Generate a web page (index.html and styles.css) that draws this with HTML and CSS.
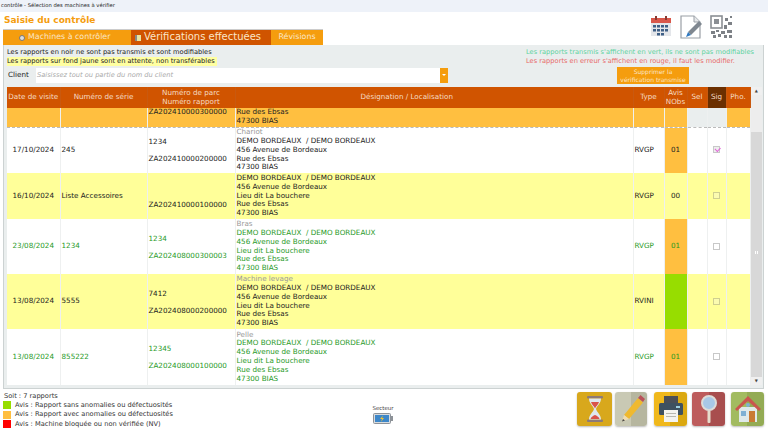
FILE: index.html
```html
<!DOCTYPE html>
<html lang="fr">
<head>
  <meta charset="UTF-8" />
  <title>contrôle - Sélection des machines à vérifier</title>
  <link rel="stylesheet" href="styles.css">
</head>
<body>
  <div class="titlebar">contrôle - Sélection des machines à vérifier</div>

  <div class="head">
    <h1>Saisie du contrôle</h1>
    <div class="head-icons">
      <svg width="22" height="22" viewBox="0 0 22 22">
        <rect x="1" y="3" width="20" height="18" fill="#e4e6ea"/>
        <rect x="1" y="3" width="20" height="5" fill="#d9574a"/>
        <rect x="5" y="1" width="2" height="4" fill="#8a3a32"/>
        <rect x="15" y="1" width="2" height="4" fill="#8a3a32"/>
        <g fill="#3f5f86">
          <rect x="3" y="10" width="3" height="2.5"/><rect x="7" y="10" width="3" height="2.5"/><rect x="11" y="10" width="3" height="2.5"/><rect x="15" y="10" width="3" height="2.5"/>
          <rect x="3" y="14" width="3" height="2.5"/><rect x="7" y="14" width="3" height="2.5"/><rect x="11" y="14" width="3" height="2.5"/><rect x="15" y="14" width="3" height="2.5"/>
          <rect x="7" y="18" width="3" height="2.5"/><rect x="11" y="18" width="3" height="2.5"/>
        </g>
      </svg>
      <svg width="22" height="24" viewBox="0 0 22 24">
        <path d="M1 1h13l6 6v16H1z" fill="#fff" stroke="#9a9fa6" stroke-width="1.2"/>
        <path d="M14 1v6h6" fill="#e6e8ea" stroke="#9a9fa6"/>
        <path d="M19 6l3 3-11 11-3-3z" fill="#7f8790"/>
        <path d="M8 17l3 3-5 2z" fill="#2f78c0"/>
      </svg>
      <svg width="24" height="24" viewBox="0 0 24 24">
        <rect x="1" y="1" width="11" height="12" fill="none" stroke="#8b8f94" stroke-width="1.6"/>
        <rect x="4" y="4" width="5" height="5" fill="#8b8f94"/>
        <g fill="#7d8186">
          <rect x="15" y="3" width="3" height="3"/><rect x="20" y="1" width="2" height="2"/><rect x="18" y="7" width="4" height="3"/><rect x="14" y="10" width="3" height="4"/>
          <rect x="1" y="16" width="4" height="3"/><rect x="6" y="15" width="3" height="2"/><rect x="11" y="16" width="4" height="3"/><rect x="17" y="15" width="5" height="3"/>
          <rect x="3" y="20" width="3" height="3"/><rect x="8" y="19" width="3" height="3"/><rect x="14" y="20" width="3" height="3"/><rect x="19" y="20" width="3" height="3"/>
        </g>
      </svg>
    </div>
  </div>

  <div class="tabs">
    <div class="tab tab-machines"><span class="tab-ico clock"></span>Machines à contrôler</div>
    <div class="tab tab-active"><span class="tab-ico note"></span>Vérifications effectuées</div>
    <div class="tab tab-revisions">Révisions</div>
  </div>

  <div class="panel">
    <div class="notes">
      <div>
        <div>Les rapports en noir ne sont pas transmis et sont modifiables</div>
        <div class="note-yellow">Les rapports sur fond jaune sont en attente, non transférables</div>
      </div>
      <div class="notes-right">
        <div class="note-green">Les rapports transmis s'affichent en vert, ils ne sont pas modifiables</div>
        <div class="note-red">Les rapports en erreur s'affichent en rouge, il faut les modifier.</div>
      </div>
    </div>

    <div class="client-row">
      <label>Client</label>
      <div class="client-input">Saisissez tout ou partie du nom du client</div>
      <div class="client-drop"></div>
      <button class="btn-delete">Supprimer la<br>vérification transmise</button>
    </div>

    <div class="grid-wrap">
      <table class="grid">
        <colgroup>
          <col class="c-date"><col class="c-serie"><col class="c-parc"><col class="c-desig"><col class="c-type"><col class="c-avis"><col class="c-sel"><col class="c-sig"><col class="c-pho">
        </colgroup>
        <thead>
          <tr>
            <th>Date de visite</th>
            <th>Numéro de série</th>
            <th>Numéro de parc<br>Numéro rapport</th>
            <th class="th-desig">Désignation / Localisation</th>
            <th>Type</th>
            <th>Avis<br>NObs</th>
            <th>Sel</th>
            <th class="th-sig">Sig</th>
            <th>Pho.</th>
          </tr>
        </thead>
        <tbody>
          <tr class="row-current">
            <td></td>
            <td></td>
            <td class="top">ZA202410000300000</td>
            <td class="left top">Rue des Ebsas<br>47300 BIAS</td>
            <td></td>
            <td></td>
            <td class="blank"></td>
            <td class="blank"></td>
            <td></td>
          </tr>
          <tr class="h5">
            <td class="date">17/10/2024</td>
            <td>245</td>
            <td><div class="parc">1234</div><div class="parc">ZA202410000200000</div></td>
            <td class="left"><span class="machine">Chariot</span><br>DEMO BORDEAUX &nbsp;/ DEMO BORDEAUX<br>456 Avenue de Bordeaux<br>Rue des Ebsas<br>47300 BIAS</td>
            <td>RVGP</td>
            <td class="avis-orange center">01</td>
            <td></td>
            <td class="center"><span class="check checked"></span></td>
            <td></td>
          </tr>
          <tr class="h5 row-yellow">
            <td class="date">16/10/2024</td>
            <td>Liste Accessoires</td>
            <td><div class="parc">&nbsp;</div><div class="parc">ZA202410000100000</div></td>
            <td class="left">DEMO BORDEAUX &nbsp;/ DEMO BORDEAUX<br>456 Avenue de Bordeaux<br>Lieu dit La bouchere<br>Rue des Ebsas<br>47300 BIAS</td>
            <td>RVGP</td>
            <td class="center">00</td>
            <td></td>
            <td class="center"><span class="check dim"></span></td>
            <td></td>
          </tr>
          <tr class="h6 row-green">
            <td class="date">23/08/2024</td>
            <td>1234</td>
            <td><div class="parc">1234</div><div class="parc">ZA202408000300003</div></td>
            <td class="left"><span class="machine">Bras</span><br>DEMO BORDEAUX &nbsp;/ DEMO BORDEAUX<br>456 Avenue de Bordeaux<br>Lieu dit La bouchere<br>Rue des Ebsas<br>47300 BIAS</td>
            <td>RVGP</td>
            <td class="avis-orange center">01</td>
            <td></td>
            <td class="center"><span class="check"></span></td>
            <td></td>
          </tr>
          <tr class="h6 row-yellow">
            <td class="date">13/08/2024</td>
            <td>5555</td>
            <td><div class="parc">7412</div><div class="parc">ZA202408000200000</div></td>
            <td class="left"><span class="machine">Machine levage</span><br>DEMO BORDEAUX &nbsp;/ DEMO BORDEAUX<br>456 Avenue de Bordeaux<br>Lieu dit La bouchere<br>Rue des Ebsas<br>47300 BIAS</td>
            <td>RVINI</td>
            <td class="avis-green"></td>
            <td></td>
            <td class="center"><span class="check dim"></span></td>
            <td></td>
          </tr>
          <tr class="h7 row-green">
            <td class="date">13/08/2024</td>
            <td>855222</td>
            <td><div class="parc">12345</div><div class="parc">ZA202408000100000</div></td>
            <td class="left"><span class="machine">Pelle</span><br>DEMO BORDEAUX &nbsp;/ DEMO BORDEAUX<br>456 Avenue de Bordeaux<br>Lieu dit La bouchere<br>Rue des Ebsas<br>47300 BIAS</td>
            <td>RVGP</td>
            <td class="avis-orange center">01</td>
            <td></td>
            <td class="center"><span class="check"></span></td>
            <td></td>
          </tr>
        </tbody>
      </table>
      <div class="scrollbar">
        <div class="sb-btn">&#9650;</div>
        <div class="sb-thumb"></div>
        <div class="sb-track"><span class="sb-grip"></span></div>
        <div class="sb-btn">&#9660;</div>
      </div>
    </div>
  </div>

  <div class="footer">
    <div class="legend">
      <div class="legend-count">Soit : 7 rapports</div>
      <div class="legend-row"><span class="swatch sw-green"></span>Avis : Rapport sans anomalies ou défectuosités</div>
      <div class="legend-row"><span class="swatch sw-orange"></span>Avis : Rapport avec anomalies ou défectuosités</div>
      <div class="legend-row"><span class="swatch sw-red"></span>Avis : Machine bloquée ou non vérifiée (NV)</div>
    </div>
    <div class="sector">
      <div>Secteur</div>
      <svg width="20" height="11" viewBox="0 0 20 11">
        <rect x="0.5" y="0.5" width="17" height="10" rx="1" fill="#d8dbde" stroke="#8d9298"/>
        <rect x="18" y="3" width="2" height="5" fill="#8d9298"/>
        <rect x="2" y="2" width="14" height="7" fill="#3d87c9"/>
        <path d="M10 2.500L7 6h2l-1 3 3-4H9z" fill="#f2c230"/>
      </svg>
    </div>
    <div class="actions">
      <div class="action act-hourglass">
        <svg width="26" height="30" viewBox="0 0 26 30">
          <rect x="5" y="2" width="16" height="2.500" rx="1" fill="#8d7a78"/>
          <rect x="5" y="25.500" width="16" height="2.500" rx="1" fill="#8d7a78"/>
          <path d="M7 4.500h12c0 5-4 7-5 10.500 1 3.500 5 5.500 5 10.500H7c0-5 4-7 5-10.500C11 11.500 7 9.500 7 4.500z" fill="#dfe8ee"/>
          <path d="M9 8h8c-1 3-3 4-4 6.500C12 12 10 11 9 8z" fill="#d9534a"/>
          <path d="M8.500 25c.5-2 3-3.500 4.500-4 1.500.5 4 2 4.500 4z" fill="#d9534a"/>
        </svg>
      </div>
      <div class="action act-pencil">
        <svg width="28" height="30" viewBox="0 0 28 30">
          <path d="M7 21L21 4l5 4.500L12 25z" fill="#efb92f"/>
          <path d="M21 4l2.500-3 4.500 4-2 3z" fill="#b9525a"/>
          <path d="M7 21l5 4-7 2.500z" fill="#f0dcb0"/>
          <path d="M5 27.500l1-2.500 2 1.500z" fill="#444"/>
        </svg>
      </div>
      <div class="action act-print">
        <svg width="26" height="28" viewBox="0 0 26 28">
          <rect x="6" y="1" width="14" height="8" fill="#4a4f57"/>
          <rect x="1" y="8" width="24" height="12" rx="1.500" fill="#3e5160"/>
          <rect x="18" y="11" width="4" height="2" fill="#9fd0e0"/>
          <rect x="6" y="15" width="14" height="12" fill="#f4f4f0"/>
          <rect x="8" y="18" width="10" height="1" fill="#b8b8b0"/>
          <rect x="8" y="21" width="10" height="1" fill="#b8b8b0"/>
        </svg>
      </div>
      <div class="action act-search">
        <svg width="22" height="30" viewBox="0 0 22 30">
          <rect x="9.500" y="16" width="3" height="13" rx="1" fill="#e6dccb"/>
          <circle cx="11" cy="9" r="7" fill="#a8c8e6" stroke="#dcdcd8" stroke-width="2"/>
        </svg>
      </div>
      <div class="action act-home">
        <svg width="28" height="28" viewBox="0 0 28 28">
          <rect x="5" y="12" width="18" height="15" fill="#dfe9ea"/>
          <path d="M14 1L1 14l2 2L14 6l11 10 2-2z" fill="#c9564e"/>
          <circle cx="14" cy="10" r="2" fill="#7fb0d4"/>
          <rect x="15" y="16" width="6" height="11" fill="#c97a34"/>
          <rect x="7" y="16" width="5" height="5" fill="#7fb0d4"/>
        </svg>
      </div>
    </div>
  </div>
</body>
</html>
```

FILE: styles.css
```css
* {
  margin: 0;
  padding: 0;
  box-sizing: border-box;
}

html, body {
  width: 768px;
  height: 432px;
  overflow: hidden;
}

body {
  background: #fff;
  font-family: "DejaVu Sans", Verdana, sans-serif;
  font-size: 6.660px;
  line-height: 8.800px;
  color: #222;
}

.titlebar {
  height: 11.500px;
  padding-left: 1px;
  background: #eef2f9;
  font-size: 5.250px;
  line-height: 11px;
  color: #222;
}

.head {
  height: 17.500px;
  padding: 0 20px 0 4px;
  display: flex;
  justify-content: space-between;
  position: relative;
}

.head h1 {
  font-size: 9px;
  line-height: 17px;
  font-weight: bold;
  color: #f59d0e;
}

.head-icons {
  position: absolute;
  top: 3px;
  left: 650px;
  display: flex;
  align-items: flex-start;
  gap: 8px;
}

.tabs {
  display: flex;
  height: 16px;
  margin-left: 3px;
}

.tab {
  display: flex;
  align-items: center;
  color: #fbe6c8;
  background: #f59d0e;
  border-top: 1px solid #ccc;
}

.tab-machines { width: 128px; padding-left: 16px; font-size: 7.900px; }
.tab-active { width: 140px; padding-left: 4px; background: #d05400; font-size: 10px; }
.tab-revisions { width: 52px; justify-content: center; font-size: 7.900px; }

.tab-ico {
  width: 6px;
  height: 6px;
  margin-right: 3px;
}

.clock { background: #ddd; border-radius: 50%; border: 1px solid #777; }
.note { background: #e8e4a0; border-left: 2px solid #888; }

.panel {
  margin: 0 4px 0 3px;
  height: 343.500px;
  background: #eaeeee;
  border: 1px solid #ccd2d2;
  border-top: 0;
  padding: 3px 1px 0 3px;
}

.notes {
  display: flex;
  justify-content: space-between;
  padding-right: 8px;
  height: 18px;
}

.note-yellow {
  background: #ffffa0;
  width: 210px;
}

.note-green { color: #5dd39e; }
.note-red { color: #e86a6a; }

.client-row {
  display: flex;
  align-items: center;
  height: 17px;
  margin: 1px 0 3px;
}

.client-row label {
  width: 29px;
  padding-left: 1px;
  font-size: 7.200px;
}

.client-input {
  width: 404px;
  height: 15px;
  padding-left: 1px;
  background: #fff;
  font-style: italic;
  line-height: 15px;
  color: #aaa;
}

.client-drop {
  width: 8px;
  height: 15px;
  background: #f59d0e;
  position: relative;
}

.client-drop::after {
  content: "";
  position: absolute;
  left: 1.500px;
  top: 6px;
  border: 2.500px solid transparent;
  border-top-color: #fff;
}

.btn-delete {
  width: 72px;
  height: 17px;
  margin-left: 169px;
  border: 0;
  background: #f59d0e;
  color: #fbe6c8;
  font-family: inherit;
  font-size: 6px;
  line-height: 7.500px;
  white-space: nowrap;
}

.grid-wrap {
  display: flex;
  height: 298px;
  overflow: hidden;
  background: #fff;
}

.grid {
  width: 743px;
  table-layout: fixed;
  border-collapse: collapse;
  font-size: 7.200px;
  line-height: 8.800px;
}

.c-date { width: 53px; }
.c-serie { width: 87px; }
.c-parc { width: 88px; }
.c-desig { width: 398px; }
.c-type { width: 31px; }
.c-avis { width: 23px; }
.c-sel { width: 20px; }
.c-sig { width: 19px; }
.c-pho { width: 24px; }

.grid th {
  height: 21px;
  background: #d05400;
  color: #f6dcc4;
  font-weight: normal;
  border-right: 1px solid #c9590f;
  white-space: nowrap;
}

.grid th.th-sig { background: #6b2f00; }
.grid th.th-desig { text-align: left; padding-left: 125px; }

.grid td {
  padding: 0 1px;
  border-right: 1px solid #eef0f0;
  vertical-align: middle;
  overflow: hidden;
  white-space: nowrap;
}

.grid td.top { vertical-align: top; }
.grid td.center, .grid td.date { text-align: center; }

.row-current td {
  height: 19px;
  background: #ffbf40;
  border-bottom: 1px dashed #bbb;
}

.h5 td { height: 46px; }
.h6 td { height: 55px; }
.h7 td { height: 56px; }

.row-current td.blank { background: #eaeeee; }
.row-yellow td { background: #ffff99; }
.row-green td { color: #1f9a1f; }
.row-green .machine, .machine { color: #999; }

.grid td.avis-orange { background: #ffbf40; }
.grid td.avis-green { background: #97dd00; }

.parc {
  line-height: 17px;
}

.check {
  display: inline-block;
  width: 7px;
  height: 7px;
  border: 1px solid #c8c8c8;
  background: #fff;
  vertical-align: middle;
}

.check.dim {
  background: #fbfbb0;
  border-color: #cfcf90;
}

.check.checked {
  background: #eee;
  position: relative;
}

.check.checked::after {
  content: "";
  position: absolute;
  left: 0.500px;
  top: 0;
  width: 4px;
  height: 2.500px;
  border-left: 1px solid #e060d8;
  border-bottom: 1px solid #e060d8;
  transform: rotate(-45deg);
}

.scrollbar {
  width: 12px;
  display: flex;
  flex-direction: column;
  background: #d8d8d8;
}

.sb-btn {
  height: 8px;
  background: #f0f0f0;
  color: #444;
  font-size: 4px;
  line-height: 8px;
  text-align: center;
}

.sb-thumb {
  height: 37px;
  background: #ededed;
}

.sb-track {
  flex: 1;
  position: relative;
}

.sb-grip {
  position: absolute;
  left: 4px;
  top: 119px;
  width: 3px;
  height: 3px;
  border: 1px solid #fff;
  border-width: 0 1px;
}

.footer {
  display: flex;
  height: 41px;
  padding: 3px 4px 0 3px;
}

.legend {
  width: 368px;
  color: #333;
}

.legend-count {
  padding-left: 1px;
  line-height: 9px;
}

.legend-row {
  display: flex;
  align-items: center;
  gap: 4px;
  height: 9.500px;
}

.swatch {
  width: 8px;
  height: 8px;
}

.sw-green { background: #97dd00; }
.sw-orange { background: #ffbf40; }
.sw-red { background: #ff0000; }

.sector {
  width: 24px;
  margin-top: 12px;
  font-size: 5.500px;
  text-align: center;
  color: #444;
}

.sector svg {
  display: block;
  margin: 1px auto 0;
}

.actions {
  display: flex;
  margin-left: 182px;
  gap: 3px;
}

.action {
  height: 34px;
  border-radius: 3px;
  display: flex;
  align-items: center;
  justify-content: center;
  box-shadow: 0 1px 2px #bbb;
}

.act-hourglass { width: 35px; background: #d8a81c; }
.act-pencil { width: 32px; background: linear-gradient(90deg, #c9c9b4 50%, #b6b69f 50%); margin-right: 4px; }
.act-print { width: 33px; background: linear-gradient(90deg, #f0b81c 50%, #dba810 50%); margin-right: 2px; }
.act-search { width: 33px; background: linear-gradient(90deg, #bd5c5c 50%, #a84e4e 50%); margin-right: 3px; }
.act-home { width: 33px; background: linear-gradient(90deg, #a2bb60 50%, #93ab54 50%); }
```
